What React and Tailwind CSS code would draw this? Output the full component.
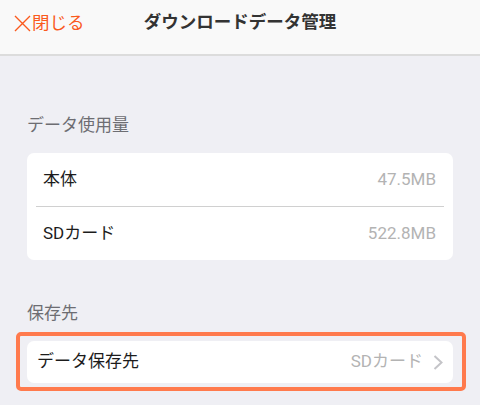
import React from "react";

const font = { fontFamily: '"Roboto", "Noto Sans CJK JP", sans-serif' };

function Row({ label, value }) {
  return (
    <div className="h-[53px] flex items-center justify-between pl-[16px] pr-[17px]">
      <span className="text-[17px] text-[#1c1c1c]">{label}</span>
      <span className="text-[17px] text-[#b3b3b3]">{value}</span>
    </div>
  );
}

export default function App() {
  return (
    <div className="w-[480px] h-[405px] bg-[#efeff4] overflow-hidden" style={font}>
      <div className="h-[56px] bg-[#f9f9f9] border-b-2 border-[#dcdcdc] relative flex items-start pt-[9px]">
        <div className="absolute left-[14px] top-[10px] flex items-center text-[#fa5a1e]">
          <svg width="17" height="17" viewBox="0 0 17 17" className="mr-[1px]">
            <path d="M1 1 L16 16 M16 1 L1 16" stroke="#fa5a1e" strokeWidth="1.4" fill="none" />
          </svg>
          <span className="text-[17.5px] leading-[26px]">閉じる</span>
        </div>
        <div className="w-full text-center text-[17.5px] leading-[26px] font-bold text-[#333]">
          ダウンロードデータ管理
        </div>
      </div>

      <div className="px-[27px]">
        <div className="mt-[57px] h-[24px] text-[17px] leading-[24px] text-[#6d6d72]">データ使用量</div>
        <div className="mt-[16px] bg-white rounded-[7px]">
          <Row label="本体" value="47.5MB" />
          <div className="ml-[9px] mr-[9px] h-[1px] bg-[#d0d0d0]" />
          <Row label="SDカード" value="522.8MB" />
        </div>

        <div className="mt-[41px] h-[24px] text-[17px] leading-[24px] text-[#6d6d72]">保存先</div>
        <div className="mt-[7px] ml-[-11px] mr-[-13px] border-4 border-[#ff7a4d] rounded-[5px] pl-[7px] pr-[9px] pt-[5px] pb-[4px]">
          <div className="h-[42px] bg-white rounded-[7px] flex items-center justify-between pl-[10px] pr-[10px]">
            <span className="text-[17px] text-[#1c1c1c]">データ保存先</span>
            <span className="flex items-center text-[17px] text-[#b3b3b3]">
              SDカード
              <svg width="10" height="15" viewBox="0 0 10 15" className="ml-[10px]">
                <path d="M1.5 1 L8.5 7.5 L1.5 14" stroke="#c4c4c8" strokeWidth="2" fill="none" />
              </svg>
            </span>
          </div>
        </div>
      </div>
    </div>
  );
}
